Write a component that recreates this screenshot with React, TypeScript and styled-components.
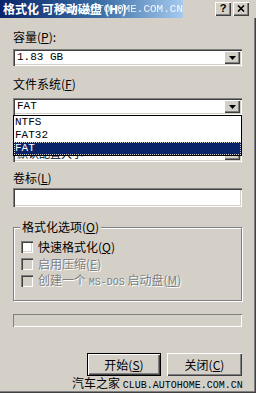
import React from 'react'
import styled, {createGlobalStyle} from 'styled-components'

const GlobalStyle = createGlobalStyle`
  html, body {
    margin: 0;
    padding: 0;
    background: #d4d0c8;
  }
  body {
    font-family: "Noto Sans CJK SC", "Liberation Sans", sans-serif;
    font-size: 12px;
    color: #000;
  }
`

const MONO = `"Liberation Mono", "Noto Sans CJK SC", monospace`

const RAISED = `inset 1px 1px 0 #fff, inset -1px -1px 0 #404040, inset -2px -2px 0 #808080`
const SUNKEN = `inset 1px 1px 0 #808080, inset 2px 2px 0 #404040, inset -1px -1px 0 #fff, inset -2px -2px 0 #d4d0c8`

const Window = styled.div`
  position: relative;
  width: 256px;
  height: 393px;
  box-sizing: border-box;
  background: #d4d0c8;
  box-shadow: inset -1px -1px 0 #404040, inset -2px -2px 0 #808080;
  display: flex;
  flex-direction: column;
  overflow: hidden;
`

const TitleBar = styled.div`
  position: relative;
  height: 18px;
  flex: none;
  display: flex;
  align-items: center;
  gap: 2px;
  padding: 0 7px 0 3px;
  background: linear-gradient(
    to right,
    #0a246a 0,
    #3a6ea5 100px,
    #a6caf0 183px,
    #d4d0c8 183px
  );
`

const Title = styled.span`
  flex: 1;
  color: #fff;
  font-weight: bold;
  font-size: 12px;
  line-height: 18px;
  white-space: nowrap;
`

const TitleMark = styled.span`
  position: absolute;
  right: 73px;
  top: 2px;
  font-family: ${MONO};
  font-size: 11px;
  line-height: 14px;
  color: #fff;
  opacity: 0.9;
`

const TitleButton = styled.div`
  width: 16px;
  height: 14px;
  box-sizing: border-box;
  background: #d4d0c8;
  box-shadow: ${RAISED};
  display: flex;
  align-items: center;
  justify-content: center;
  font-family: "Liberation Sans", sans-serif;
  font-weight: bold;
  font-size: 11px;
  line-height: 1;
  padding-bottom: 1px;
`

const Body = styled.div`
  display: flex;
  flex-direction: column;
  padding: 12px 14px 0 13px;
`

const Label = styled.div<{top: number}>`
  margin-top: ${(p) => p.top}px;
  height: 14px;
  line-height: 14px;
  font-size: 12px;
  white-space: nowrap;
`

const ComboWrap = styled.div<{top: number}>`
  position: relative;
  margin-top: ${(p) => p.top}px;
`

const Combo = styled.div`
  height: 17px;
  box-sizing: border-box;
  padding: 2px;
  background: #fff;
  box-shadow: ${SUNKEN};
  display: flex;
  align-items: stretch;
`

const ComboText = styled.span<{cjk?: boolean}>`
  flex: 1;
  padding-left: 2px;
  font-family: ${(p) => (p.cjk ? `"Noto Sans CJK SC", sans-serif` : MONO)};
  font-size: 11px;
  line-height: 13px;
  white-space: nowrap;
  overflow: hidden;
`

const DropButton = styled.div`
  width: 16px;
  background: #d4d0c8;
  box-shadow: ${RAISED};
  display: flex;
  align-items: center;
  justify-content: center;
`

const DropList = styled.div`
  position: absolute;
  top: 100%;
  left: 0;
  right: 0;
  z-index: 2;
  border: 1px solid #000;
  background: #fff;
`

const DropItem = styled.div<{selected?: boolean}>`
  height: 13px;
  line-height: 13px;
  padding-left: 1px;
  font-family: ${MONO};
  font-size: 11px;
  background: ${(p) => (p.selected ? '#0a246a' : '#fff')};
  color: ${(p) => (p.selected ? '#fff' : '#000')};
  outline: ${(p) => (p.selected ? '1px dotted #d4d0c8' : 'none')};
  outline-offset: -1px;
`

const TextInput = styled.div<{top: number}>`
  margin-top: ${(p) => p.top}px;
  height: 19px;
  background: #fff;
  box-shadow: ${SUNKEN};
`

const Group = styled.fieldset`
  margin: 13px 0 0;
  padding: 6px 0 12px 7px;
  min-width: 0;
  border: 1px solid #808080;
  box-shadow: 1px 1px 0 #fff, inset 1px 1px 0 #fff;
  display: flex;
  flex-direction: column;
  gap: 3px;
`

const Legend = styled.legend`
  margin-left: -1px;
  padding: 0 2px;
  height: 14px;
  line-height: 14px;
  background: #d4d0c8;
  white-space: nowrap;
`

const CheckRow = styled.div<{disabled?: boolean}>`
  display: flex;
  align-items: center;
  gap: 5px;
  height: 14px;
  line-height: 14px;
  white-space: nowrap;
  color: ${(p) => (p.disabled ? '#808080' : '#000')};
  text-shadow: ${(p) => (p.disabled ? '1px 1px 0 #fff' : 'none')};
`

const CheckBox = styled.span<{disabled?: boolean}>`
  width: 12px;
  height: 12px;
  flex: none;
  background: ${(p) => (p.disabled ? '#d4d0c8' : '#fff')};
  box-shadow: ${SUNKEN};
`

const Mono = styled.span`
  font-family: ${MONO};
  font-size: 10px;
`

const Progress = styled.div`
  margin-top: 13px;
  height: 13px;
  box-shadow: inset 1px 1px 0 #808080, inset -1px -1px 0 #fff;
`

const ButtonRow = styled.div`
  margin-top: 26px;
  display: flex;
  justify-content: flex-end;
  gap: 6px;
`

const Button = styled.div<{primary?: boolean; width: number}>`
  width: ${(p) => p.width}px;
  height: 23px;
  box-sizing: border-box;
  border: ${(p) => (p.primary ? '1px solid #000' : 'none')};
  background: #d4d0c8;
  box-shadow: ${RAISED};
  display: flex;
  align-items: center;
  justify-content: center;
  font-size: 12px;
`

const Watermark = styled.div`
  position: absolute;
  left: 72px;
  top: 376px;
  z-index: 3;
  white-space: nowrap;
  font-size: 12px;
  line-height: 14px;
  color: #000;
  & > span {
    font-family: ${MONO};
    font-size: 10px;
  }
`

const Arrow = () => (
  <svg width="7" height="4" viewBox="0 0 7 4">
    <path d="M0 0h7L3.5 4z" fill="#000" />
  </svg>
)

const CloseGlyph = () => (
  <svg width="8" height="7" viewBox="0 0 8 7">
    <path d="M1 0.5l6 6M7 0.5l-6 6" stroke="#000" strokeWidth="1.6" />
  </svg>
)

export default function App() {
  return (
    <>
      <GlobalStyle />
      <Window>
        <TitleBar>
          <Title>格式化 可移动磁盘 (H:)</Title>
          <TitleMark>WWW.AUTOHOME.COM.CN</TitleMark>
          <TitleButton>?</TitleButton>
          <TitleButton>
            <CloseGlyph />
          </TitleButton>
        </TitleBar>

        <Body>
          <Label top={0}>
            容量(<u>P</u>):
          </Label>
          <ComboWrap top={5}>
            <Combo>
              <ComboText>1.83 GB</ComboText>
              <DropButton>
                <Arrow />
              </DropButton>
            </Combo>
          </ComboWrap>

          <Label top={11}>
            文件系统(<u>F</u>)
          </Label>
          <ComboWrap top={7}>
            <Combo>
              <ComboText>FAT</ComboText>
              <DropButton>
                <Arrow />
              </DropButton>
            </Combo>
            <DropList>
              <DropItem>NTFS</DropItem>
              <DropItem>FAT32</DropItem>
              <DropItem selected>FAT</DropItem>
            </DropList>
          </ComboWrap>

          <Label top={11}>
            分配单元大小(<u>A</u>)
          </Label>
          <ComboWrap top={5}>
            <Combo>
              <ComboText cjk>默认配置大小</ComboText>
              <DropButton>
                <Arrow />
              </DropButton>
            </Combo>
          </ComboWrap>

          <Label top={9}>
            卷标(<u>L</u>)
          </Label>
          <TextInput top={3} />

          <Group>
            <Legend>
              格式化选项(<u>O</u>)
            </Legend>
            <CheckRow>
              <CheckBox />
              <span>
                快速格式化(<u>Q</u>)
              </span>
            </CheckRow>
            <CheckRow disabled>
              <CheckBox disabled />
              <span>
                启用压缩(<u>E</u>)
              </span>
            </CheckRow>
            <CheckRow disabled>
              <CheckBox disabled />
              <span>
                创建一个 <Mono>MS-DOS</Mono> 启动盘(<u>M</u>)
              </span>
            </CheckRow>
          </Group>

          <Progress />

          <ButtonRow>
            <Button primary width={74}>
              <span>
                开始(<u>S</u>)
              </span>
            </Button>
            <Button width={75}>
              <span>
                关闭(<u>C</u>)
              </span>
            </Button>
          </ButtonRow>
        </Body>

        <Watermark>
          汽车之家 <span>CLUB.AUTOHOME.COM.CN</span>
        </Watermark>
      </Window>
    </>
  )
}
